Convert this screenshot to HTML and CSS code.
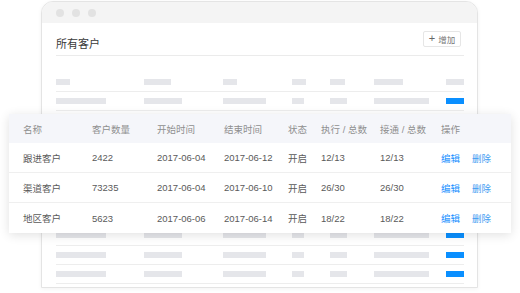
FILE: index.html
```html
<!DOCTYPE html>
<html lang="zh">
<head>
<meta charset="utf-8">
<link rel="stylesheet" href="styles.css">
</head>
<body>
<div class="window">
  <div class="titlebar">
    <span class="dot"></span><span class="dot"></span><span class="dot"></span>
  </div>
  <div class="content">
    <div class="head">
      <div class="title">所有客户</div>
      <div class="add-btn"><span class="plus">+</span>增加</div>
    </div>
    <div class="skel">
      <div class="skel-row skel-head">
        <i class="b" style="width:14px"></i><i class="b" style="width:27px"></i><i class="b" style="width:14px"></i><i class="b" style="width:14px"></i><i class="b" style="width:15px"></i><i class="b" style="width:29px"></i><i class="b" style="width:18px"></i>
      </div>
      <div class="skel-row"><i class="b" style="width:50px"></i><i class="b" style="width:38px"></i><i class="b" style="width:43px"></i><i class="b" style="width:12px"></i><i class="b" style="width:17px"></i><i class="b" style="width:55px"></i><i class="b blue" style="width:18px"></i></div>
      <div class="skel-row"><i class="b" style="width:50px"></i><i class="b" style="width:38px"></i><i class="b" style="width:43px"></i><i class="b" style="width:12px"></i><i class="b" style="width:17px"></i><i class="b" style="width:55px"></i><i class="b blue" style="width:18px"></i></div>
      <div class="skel-row"><i class="b" style="width:50px"></i><i class="b" style="width:38px"></i><i class="b" style="width:43px"></i><i class="b" style="width:12px"></i><i class="b" style="width:17px"></i><i class="b" style="width:55px"></i><i class="b blue" style="width:18px"></i></div>
      <div class="skel-row"><i class="b" style="width:50px"></i><i class="b" style="width:38px"></i><i class="b" style="width:43px"></i><i class="b" style="width:12px"></i><i class="b" style="width:17px"></i><i class="b" style="width:55px"></i><i class="b blue" style="width:18px"></i></div>
      <div class="skel-row"><i class="b" style="width:50px"></i><i class="b" style="width:38px"></i><i class="b" style="width:43px"></i><i class="b" style="width:12px"></i><i class="b" style="width:17px"></i><i class="b" style="width:55px"></i><i class="b blue" style="width:18px"></i></div>
      <div class="skel-row"><i class="b" style="width:50px"></i><i class="b" style="width:38px"></i><i class="b" style="width:43px"></i><i class="b" style="width:12px"></i><i class="b" style="width:17px"></i><i class="b" style="width:55px"></i><i class="b blue" style="width:18px"></i></div>
      <div class="skel-row"><i class="b" style="width:50px"></i><i class="b" style="width:38px"></i><i class="b" style="width:43px"></i><i class="b" style="width:12px"></i><i class="b" style="width:17px"></i><i class="b" style="width:55px"></i><i class="b blue" style="width:18px"></i></div>
      <div class="skel-row"><i class="b" style="width:50px"></i><i class="b" style="width:38px"></i><i class="b" style="width:43px"></i><i class="b" style="width:12px"></i><i class="b" style="width:17px"></i><i class="b" style="width:55px"></i><i class="b blue" style="width:18px"></i></div>
      <div class="skel-row"><i class="b" style="width:50px"></i><i class="b" style="width:38px"></i><i class="b" style="width:43px"></i><i class="b" style="width:12px"></i><i class="b" style="width:17px"></i><i class="b" style="width:55px"></i><i class="b blue" style="width:18px"></i></div>
      <div class="skel-row"><i class="b" style="width:50px"></i><i class="b" style="width:38px"></i><i class="b" style="width:43px"></i><i class="b" style="width:12px"></i><i class="b" style="width:17px"></i><i class="b" style="width:55px"></i><i class="b blue" style="width:18px"></i></div>
    </div>
  </div>
</div>

<div class="card">
  <div class="row row-head">
    <span>名称</span><span>客户数量</span><span>开始时间</span><span>结束时间</span><span>状态</span><span>执行 / 总数</span><span>接通 / 总数</span><span>操作</span>
  </div>
  <div class="row">
    <span>跟进客户</span><span>2422</span><span>2017-06-04</span><span>2017-06-12</span><span>开启</span><span>12/13</span><span>12/13</span><span class="ops"><a class="edit">编辑</a><a class="del">删除</a></span>
  </div>
  <div class="row">
    <span>渠道客户</span><span>73235</span><span>2017-06-04</span><span>2017-06-10</span><span>开启</span><span>26/30</span><span>26/30</span><span class="ops"><a class="edit">编辑</a><a class="del">删除</a></span>
  </div>
  <div class="row last">
    <span>地区客户</span><span>5623</span><span>2017-06-06</span><span>2017-06-14</span><span>开启</span><span>18/22</span><span>18/22</span><span class="ops"><a class="edit">编辑</a><a class="del">删除</a></span>
  </div>
</div>
</body>
</html>
```

FILE: styles.css
```css
html, body {
  margin: 0;
  padding: 0;
  background: #ffffff;
}
body {
  width: 520px;
  height: 293px;
  overflow: hidden;
  position: relative;
  font-family: "Liberation Sans", "Noto Sans CJK SC", sans-serif;
}
.window {
  margin: 1px 0 0 41px;
  width: 437px;
  height: 287px;
  box-sizing: border-box;
  border: 1px solid #e4e4e4;
  border-radius: 12px 12px 0 0;
  box-shadow: 0 1px 4px rgba(0, 0, 0, 0.05);
  background: #fff;
  overflow: hidden;
}
.titlebar {
  height: 21px;
  background: #f4f4f4;
  display: flex;
  align-items: center;
  gap: 8px;
  padding-left: 14px;
}
.dot {
  width: 8px;
  height: 8px;
  border-radius: 50%;
  background: #e2e2e2;
}
.content {
  padding: 0 13px 0 14px;
}
.head {
  height: 32px;
  border-bottom: 1px solid #ebebeb;
  display: flex;
  align-items: center;
  justify-content: space-between;
}
.title {
  font-size: 11px;
  color: #3a3a3a;
  margin-top: 7px;
}
.add-btn {
  width: 38px;
  height: 16px;
  box-sizing: border-box;
  border: 1px solid #e6e6e6;
  border-radius: 2px;
  font-size: 8.5px;
  color: #777;
  display: flex;
  align-items: center;
  justify-content: center;
  gap: 3px;
  margin-right: 3px;
  margin-top: -1px;
}
.plus {
  font-size: 11px;
  font-weight: 300;
  line-height: 1;
  color: #666;
}
.skel-row {
  display: grid;
  grid-template-columns: 88px 79px 69px 38px 44px 72px 1fr;
  align-items: start;
  padding-top: 6px;
  height: 19.2px;
  box-sizing: border-box;
  border-bottom: 1px solid #ededed;
}
.skel-row.skel-head {
  padding-top: 23px;
  height: 36px;
}
.b {
  display: block;
  height: 6px;
  background: #e5e6ea;
}
.b.blue {
  background: #0a8fff;
}
.card {
  position: absolute;
  left: 9px;
  top: 114px;
  width: 502px;
  background: #fff;
  box-shadow: 0 2px 10px rgba(0, 0, 0, 0.12);
  font-size: 9.5px;
  color: #5a5a5a;
}
.row {
  display: grid;
  grid-template-columns: 69px 65px 67px 64px 33px 59px 61px 1fr;
  align-items: center;
  padding-left: 14px;
  height: 30px;
  border-bottom: 1px solid #efefef;
  box-sizing: border-box;
  white-space: nowrap;
}
.row.last {
  border-bottom: none;
}
.row-head {
  height: 29px;
  background: #f5f6fa;
  color: #8f8f8f;
  border-bottom: none;
}
.ops {
  display: flex;
  gap: 12px;
}
.edit {
  color: #1890ff;
}
.del {
  color: #3f9cf2;
}
```
